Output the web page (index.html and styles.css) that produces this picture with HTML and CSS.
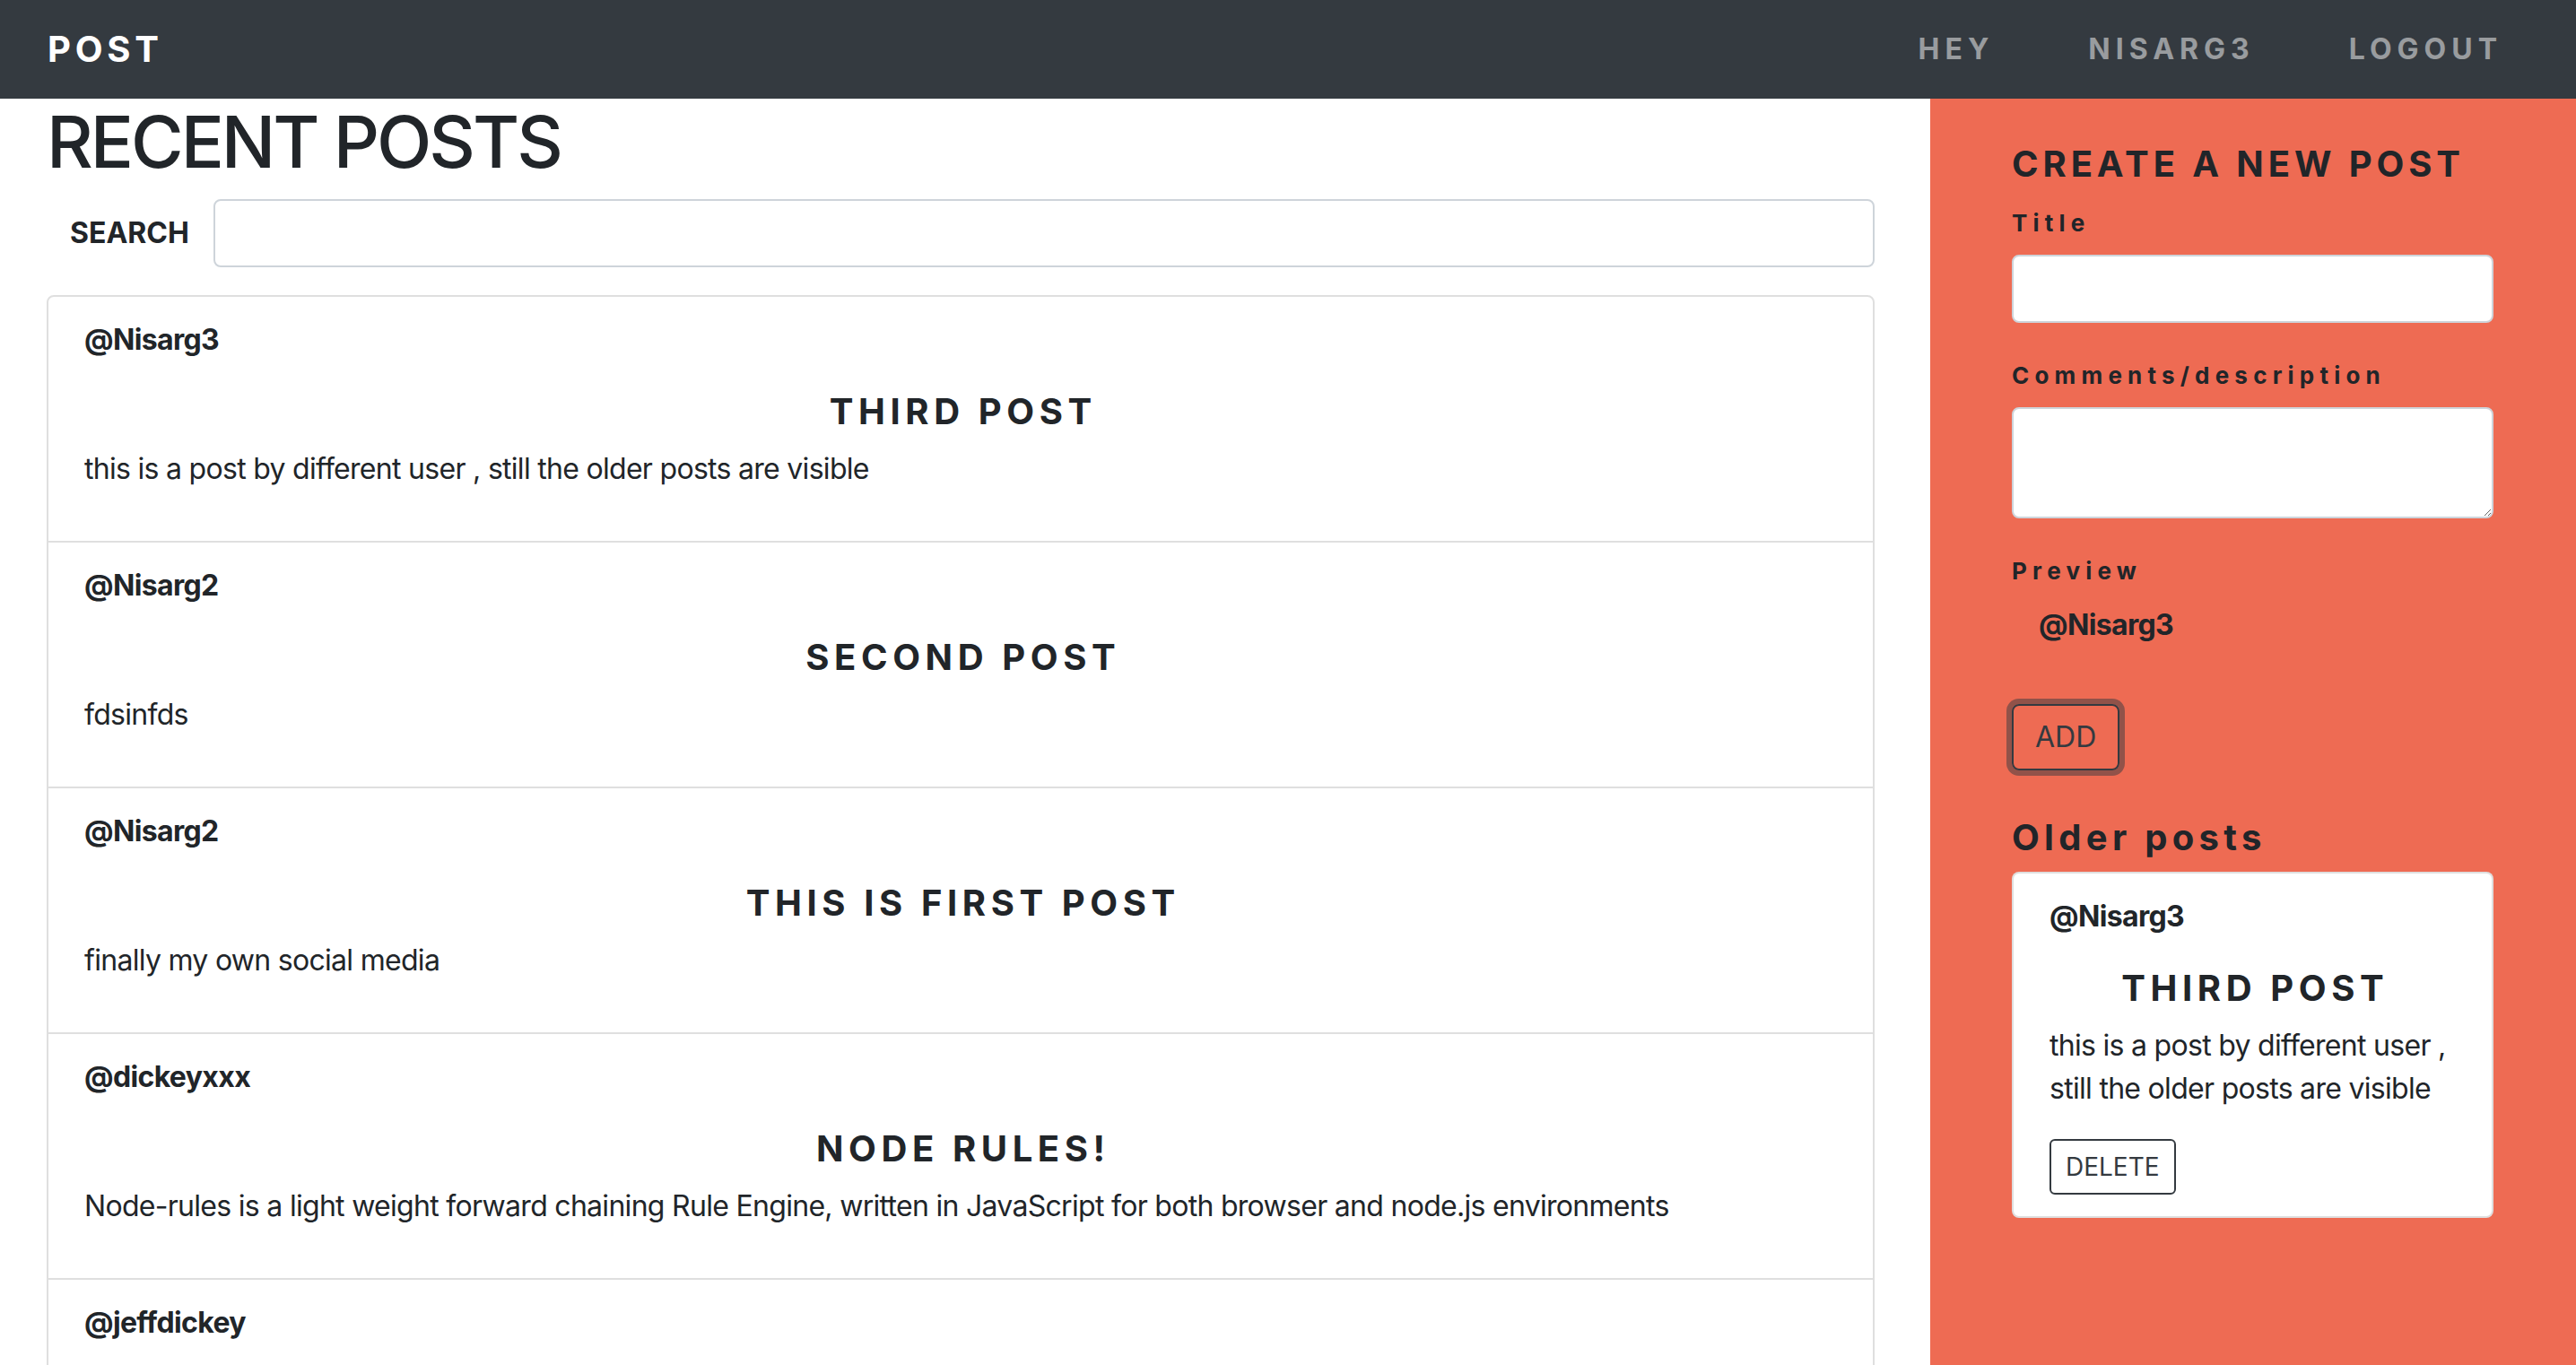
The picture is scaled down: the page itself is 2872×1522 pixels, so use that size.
FILE: index.html
```html
<!DOCTYPE html>
<html lang="en">
<head>
<meta charset="utf-8">
<title>Post</title>
<link rel="stylesheet" href="styles.css">
</head>
<body>
<nav class="navbar">
  <a class="brand" href="#">POST</a>
  <ul class="nav-links">
    <li><a class="nav-link" href="#">HEY</a></li>
    <li><a class="nav-link" href="#">NISARG3</a></li>
    <li><a class="nav-link" href="#">LOGOUT</a></li>
  </ul>
</nav>
<div class="layout">
  <main class="feed">
    <h1 class="page-title">RECENT POSTS</h1>
    <form class="search-row">
      <label class="search-label" for="search">SEARCH</label>
      <input class="field" id="search" type="text">
    </form>
    <ul class="post-list">
      <li class="post-item">
        <p class="post-author">@Nisarg3</p>
        <h5 class="post-title">THIRD POST</h5>
        <p class="post-body">this is a post by different user , still the older posts are visible</p>
      </li>
      <li class="post-item">
        <p class="post-author">@Nisarg2</p>
        <h5 class="post-title">SECOND POST</h5>
        <p class="post-body">fdsinfds</p>
      </li>
      <li class="post-item">
        <p class="post-author">@Nisarg2</p>
        <h5 class="post-title">THIS IS FIRST POST</h5>
        <p class="post-body">finally my own social media</p>
      </li>
      <li class="post-item">
        <p class="post-author">@dickeyxxx</p>
        <h5 class="post-title">NODE RULES!</h5>
        <p class="post-body">Node-rules is a light weight forward chaining Rule Engine, written in JavaScript for both browser and node.js environments</p>
      </li>
      <li class="post-item">
        <p class="post-author">@jeffdickey</p>
      </li>
    </ul>
  </main>
  <aside class="sidebar">
    <h4 class="sidebar-heading">CREATE A NEW POST</h4>
    <div class="form-group">
      <label class="field-label" for="title">Title</label>
      <input class="field" id="title" type="text">
    </div>
    <div class="form-group">
      <label class="field-label" for="desc">Comments/description</label>
      <textarea class="field field-area" id="desc"></textarea>
    </div>
    <div class="preview">
      <p class="field-label">Preview</p>
      <p class="preview-author">@Nisarg3</p>
    </div>
    <div class="actions">
      <button class="btn-add" type="button">ADD</button>
    </div>
    <h4 class="older-heading">Older posts</h4>
    <div class="older-card">
      <p class="post-author">@Nisarg3</p>
      <h5 class="post-title">THIRD POST</h5>
      <p class="post-body">this is a post by different user , still the older posts are visible</p>
      <button class="btn-delete" type="button">DELETE</button>
    </div>
  </aside>
</div>
</body>
</html>
```

FILE: styles.css
```css
* {
  box-sizing: border-box;
}

html, body {
  margin: 0;
  padding: 0;
}

body {
  font-family: Inter, "Noto Sans", sans-serif;
  font-size: 32px;
  line-height: 1.5;
  color: #212529;
  background: #fff;
}

/* Navbar */
.navbar {
  height: 110px;
  background: #343a40;
  display: flex;
  align-items: center;
  justify-content: space-between;
  padding: 0 82px 0 53px;
}

.brand {
  color: #fff;
  font-weight: 700;
  font-size: 40px;
  line-height: 1;
  letter-spacing: 4.8px;
  text-decoration: none;
}

.nav-links {
  display: flex;
  gap: 105px;
  list-style: none;
  margin: 0;
  padding: 0;
}

.nav-link {
  color: rgba(255, 255, 255, 0.5);
  font-weight: 700;
  font-size: 32px;
  line-height: 1;
  letter-spacing: 6px;
  text-decoration: none;
}

/* Layout */
.layout {
  display: flex;
  min-height: calc(100vh - 110px);
}

.feed {
  flex: 1 1 auto;
  padding: 0 62px 0 52px;
}

.page-title {
  font-size: 80px;
  line-height: 96px;
  font-weight: 500;
  letter-spacing: -0.038em;
  margin: 0 0 16px;
}

.search-row {
  display: flex;
  align-items: center;
  gap: 27px;
  padding-left: 26px;
  margin: 0 0 31px;
}

.search-label {
  font-weight: 700;
}

.field {
  display: block;
  width: 100%;
  height: 76px;
  border: 2px solid #ced4da;
  border-radius: 8px;
  background: #fff;
  font: inherit;
  padding: 12px 24px;
  color: #495057;
}

.search-row .field {
  flex: 1 1 auto;
}

/* Posts */
.post-list {
  list-style: none;
  margin: 0;
  padding: 0;
  border: 2px solid rgba(0, 0, 0, 0.125);
  border-radius: 8px;
}

.post-item {
  padding: 24px 40px;
}

.post-item + .post-item {
  border-top: 2px solid rgba(0, 0, 0, 0.125);
}

.post-author {
  margin: 0 0 32px;
  font-weight: 700;
  letter-spacing: -0.02em;
}

.post-title {
  margin: 0 0 16px;
  font-size: 40px;
  line-height: 48px;
  font-weight: 700;
  letter-spacing: 5.6px;
  text-align: center;
  padding-left: 5.6px;
}

.post-body {
  margin: 0 0 32px;
  letter-spacing: -0.022em;
}

/* Sidebar */
.sidebar {
  flex: 0 0 720px;
  background: #ee6b53;
  padding: 49px 92px 40px 91px;
}

.sidebar-heading {
  margin: 0 0 22px;
  font-size: 40px;
  line-height: 48px;
  font-weight: 700;
  letter-spacing: 4.9px;
}

.form-group {
  margin-bottom: 39px;
}

.field-label {
  display: block;
  margin: 0 0 16px;
  font-size: 26px;
  line-height: 39px;
  font-weight: 700;
  letter-spacing: 6.2px;
}

.field-area {
  height: 124px;
  resize: vertical;
}

.preview .field-label {
  margin-bottom: 17px;
}

.preview-author {
  margin: 0 0 64px 30px;
  font-weight: 700;
  letter-spacing: -0.02em;
}

.btn-add {
  font-family: inherit;
  font-size: 32px;
  line-height: 48px;
  padding: 11px 24px;
  border: 2px solid #343a40;
  border-radius: 8px;
  background: transparent;
  color: #343a40;
  box-shadow: 0 0 0 6px rgba(52, 58, 64, 0.5);
}

.older-heading {
  margin: 51px 0 14px;
  font-size: 40px;
  line-height: 48px;
  font-weight: 700;
  letter-spacing: 5.3px;
}

.older-card {
  background: #fff;
  border: 2px solid rgba(0, 0, 0, 0.125);
  border-radius: 8px;
  padding: 24px 40px;
}

.btn-delete {
  font-family: inherit;
  font-size: 28px;
  line-height: 42px;
  padding: 8px 16px;
  border: 2px solid #343a40;
  border-radius: 6px;
  background: #fff;
  color: #343a40;
}
```
